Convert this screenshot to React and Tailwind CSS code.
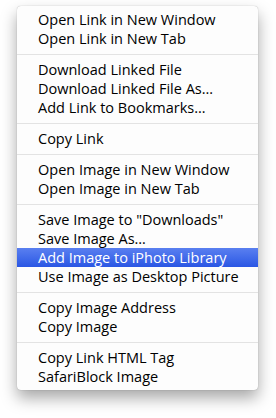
import React from 'react';

const groups = [
  ['Open Link in New Window', 'Open Link in New Tab'],
  ['Download Linked File', 'Download Linked File As…', 'Add Link to Bookmarks…'],
  ['Copy Link'],
  ['Open Image in New Window', 'Open Image in New Tab'],
  ['Save Image to "Downloads"', 'Save Image As…', 'Add Image to iPhoto Library', 'Use Image as Desktop Picture'],
  ['Copy Image Address', 'Copy Image'],
  ['Copy Link HTML Tag', 'SafariBlock Image'],
];

const highlighted = 'Add Image to iPhoto Library';

const MenuItem = ({ label }) => {
  const active = label === highlighted;
  return (
    <div
      className={`h-[19px] pl-[21px] flex items-center whitespace-nowrap ${
        active ? 'bg-gradient-to-b from-[#5a7ff0] to-[#2a56e4] text-white' : 'text-black'
      }`}
    >
      {label}
    </div>
  );
};

export default function App() {
  return (
    <div className="w-[276px] h-[418px] bg-white pt-[6px] pl-[17px]">
      <div
        className="w-[241px] bg-[#fdfdfd] rounded-[4px] py-[4px] shadow-[0_8px_16px_rgba(0,0,0,0.35),0_0_1px_rgba(0,0,0,0.35)] text-[14.5px] leading-[19px]"
        style={{ fontFamily: '"Open Sans", "Liberation Sans", sans-serif' }}
      >
        {groups.map((group, i) => (
          <div key={i}>
            {i > 0 && (
              <div className="pt-[6px] pb-[5px]">
                <div className="h-px bg-[#e3e3e3]" />
              </div>
            )}
            {group.map((label) => (
              <MenuItem key={label} label={label} />
            ))}
          </div>
        ))}
      </div>
    </div>
  );
}
